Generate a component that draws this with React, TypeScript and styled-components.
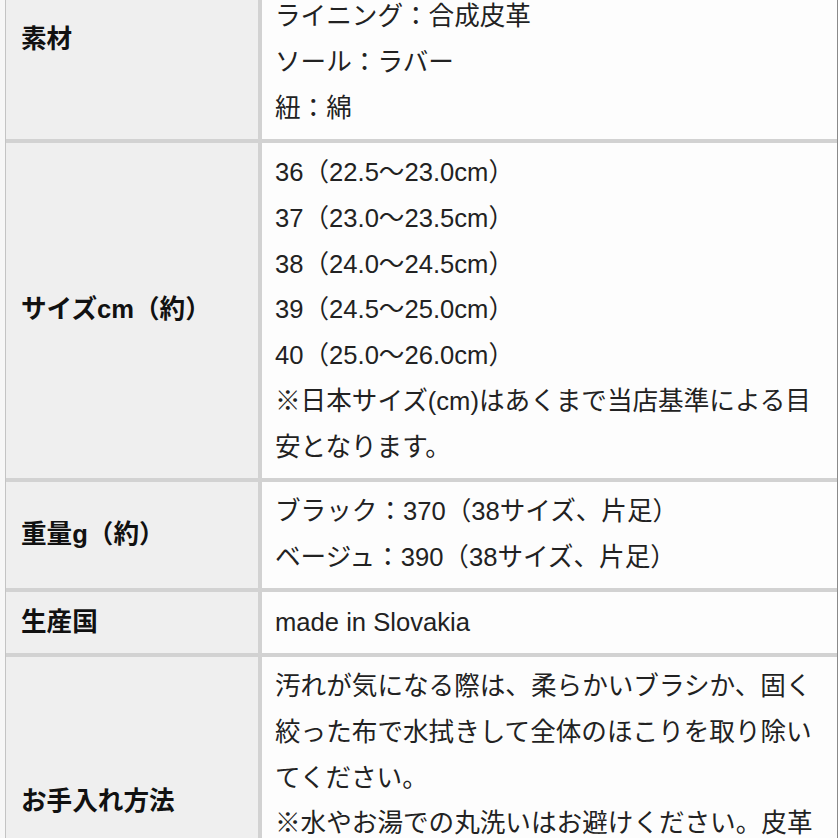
import styled, { createGlobalStyle } from "styled-components";

type SpecRow = {
  label: string;
  lines: string[];
};

const ROWS: SpecRow[] = [
  {
    label: "素材",
    lines: ["アッパー：スエード", "ライニング：合成皮革", "ソール：ラバー", "紐：綿"],
  },
  {
    label: "サイズcm（約）",
    lines: [
      "36（22.5〜23.0cm）",
      "37（23.0〜23.5cm）",
      "38（24.0〜24.5cm）",
      "39（24.5〜25.0cm）",
      "40（25.0〜26.0cm）",
      "※日本サイズ(cm)はあくまで当店基準による目安となります。",
    ],
  },
  {
    label: "重量g（約）",
    lines: ["ブラック：370（38サイズ、片足）", "ベージュ：390（38サイズ、片足）"],
  },
  {
    label: "生産国",
    lines: ["made in Slovakia"],
  },
  {
    label: "お手入れ方法",
    lines: [
      "汚れが気になる際は、柔らかいブラシか、固く絞った布で水拭きして全体のほこりを取り除いてください。",
      "※水やお湯での丸洗いはお避けください。皮革が硬くなったり、色落ちや型崩れの原因となります。",
    ],
  },
];

export default function App() {
  return (
    <>
      <GlobalStyle />
      <Page>
        <SpecTable>
          {ROWS.map((row) => (
            <Row key={row.label}>
              <LabelCell>{row.label}</LabelCell>
              <ValueCell>
                {row.lines.map((line) => (
                  <Line key={line}>{line}</Line>
                ))}
              </ValueCell>
            </Row>
          ))}
        </SpecTable>
      </Page>
    </>
  );
}

const GlobalStyle = createGlobalStyle`
  html, body {
    margin: 0;
    padding: 0;
    background: #f7f7f7;
    overflow: hidden;
  }
  body {
    font-family: "Liberation Sans", "Noto Sans CJK JP", sans-serif;
    color: #1e1e1e;
  }
`;

const Page = styled.div`
  height: 838px;
  overflow: hidden;
  padding-left: 5px;
`;

const SpecTable = styled.div`
  margin-top: -59px;
  display: grid;
  grid-template-columns: 252px 1fr;
  gap: 4px;
  background: #d2d2d2;
  border-left: 1px solid #c4c4c4;
  border-right: 1px solid #8a8a8a;
`;

const Row = styled.div`
  display: contents;
`;

const LabelCell = styled.div`
  display: flex;
  align-items: center;
  background: #efefef;
  padding: 7.5px 13px 7.5px 15px;
  font-size: 25.6px;
  line-height: 45.7px;
  font-weight: 700;
  color: #111;
`;

const ValueCell = styled.div`
  background: #fdfdfd;
  padding: 7.5px 11px 7.5px 13px;
  font-size: 25.6px;
  line-height: 45.7px;
  color: #222;
`;

const Line = styled.div`
  word-break: normal;
  line-break: strict;
`;
